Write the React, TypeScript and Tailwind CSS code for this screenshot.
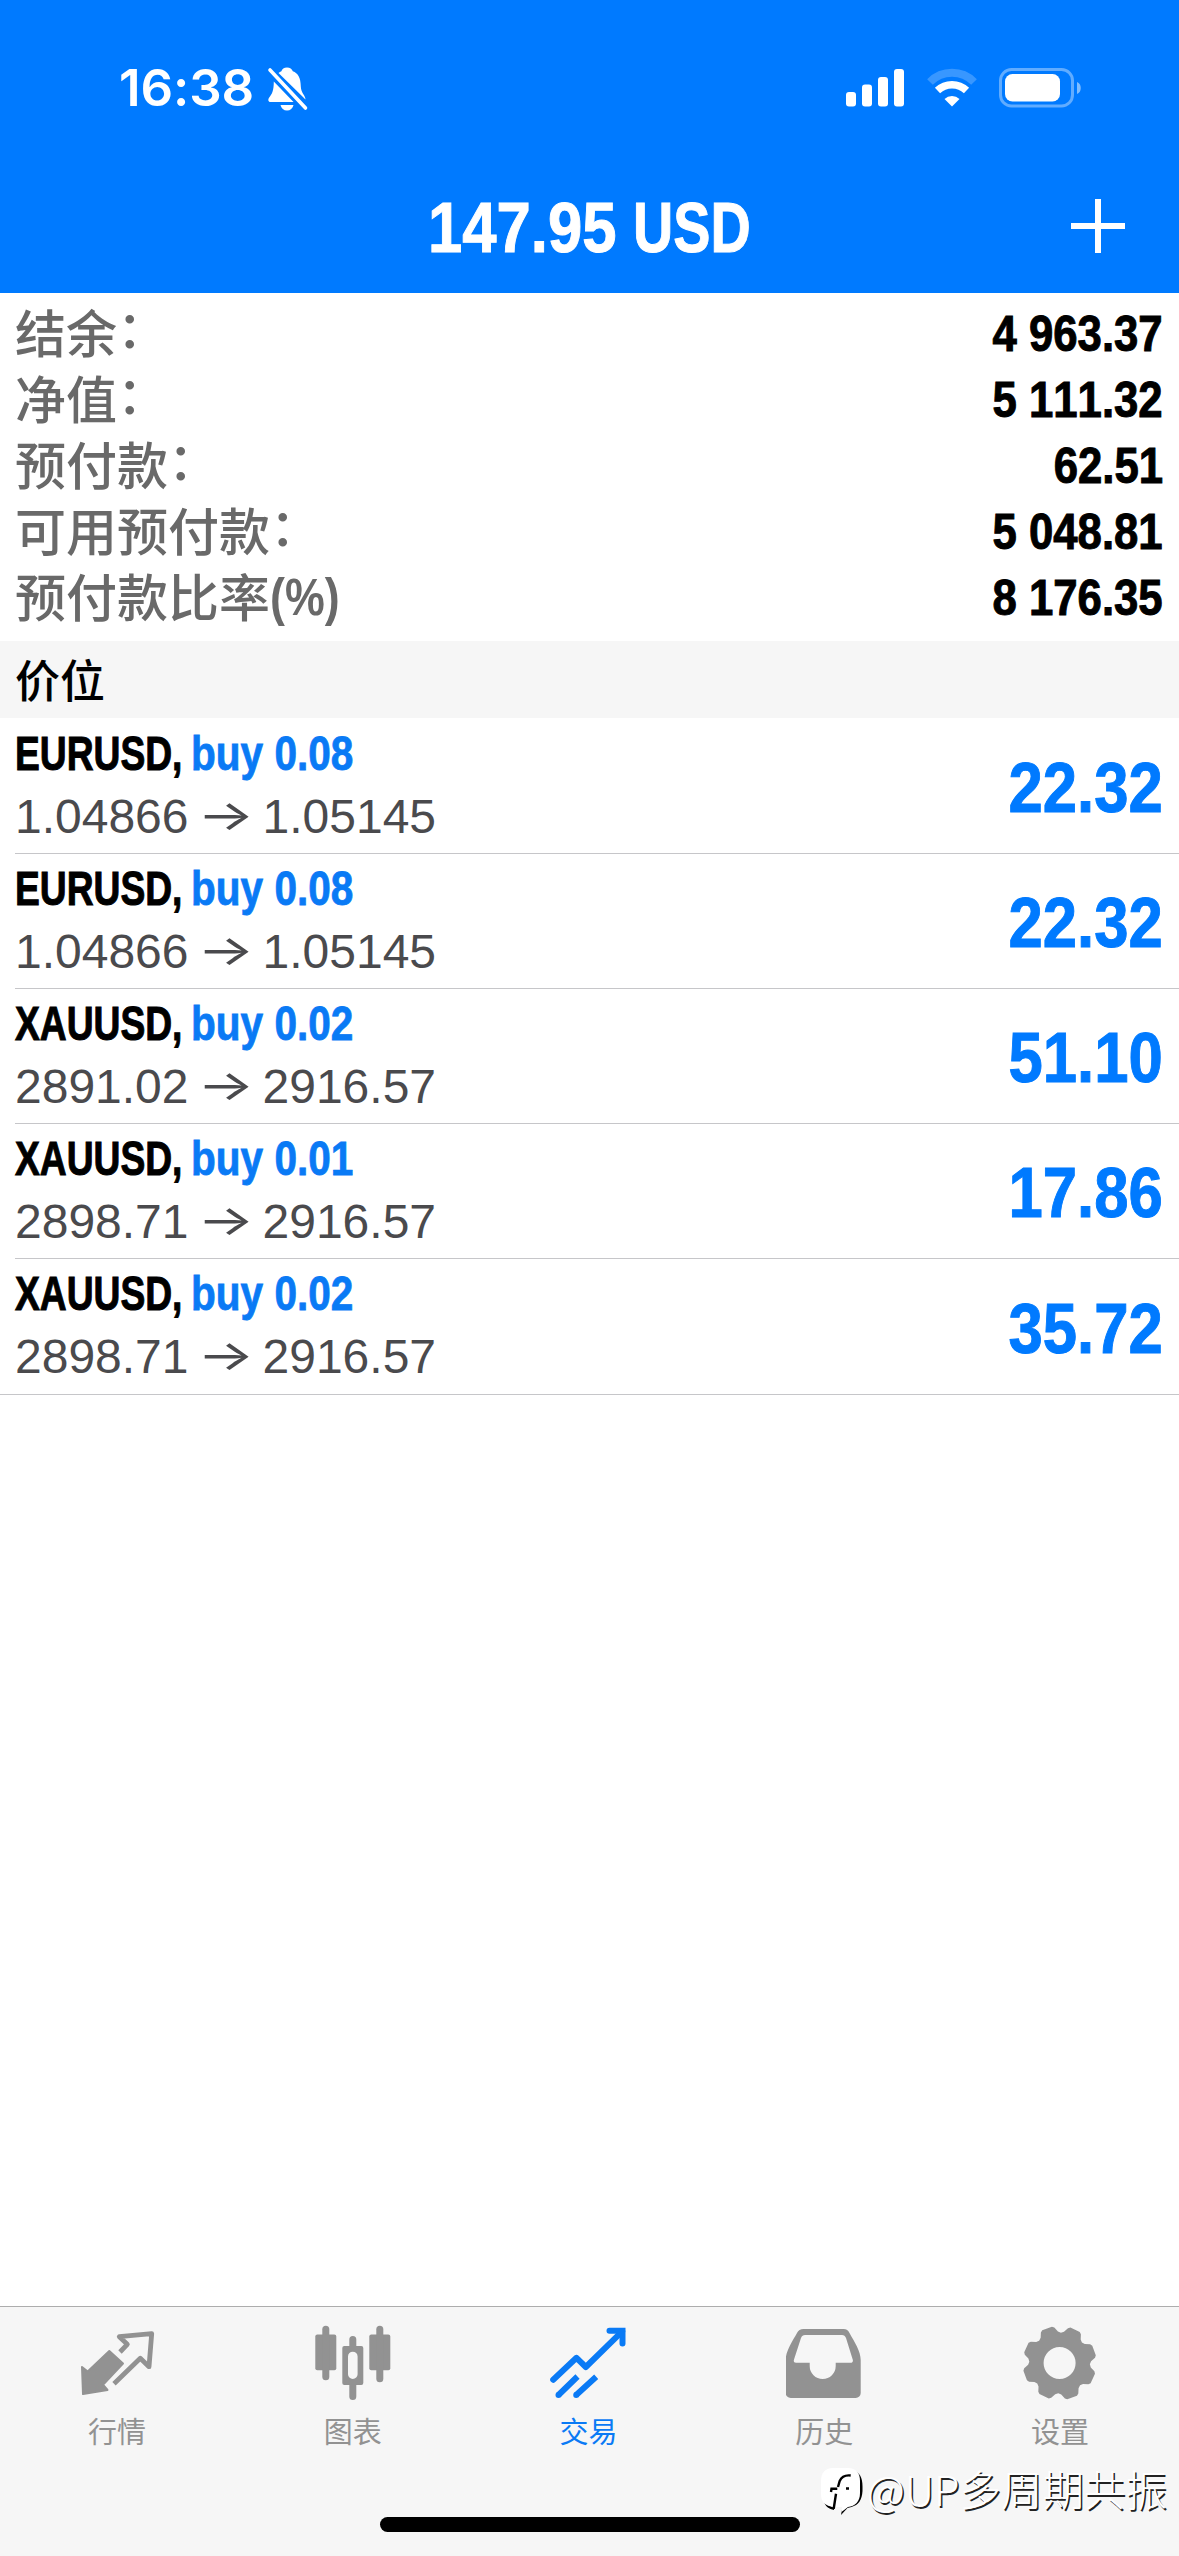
import type { ReactNode } from "react";

const summary = [
  { label: "结余", suffix: "：", value: "4 963.37" },
  { label: "净值", suffix: "：", value: "5 111.32" },
  { label: "预付款", suffix: "：", value: "62.51" },
  { label: "可用预付款", suffix: "：", value: "5 048.81" },
  { label: "预付款比率", suffix: "(%)", value: "8 176.35" },
];

const positions = [
  { symbol: "EURUSD", side: "buy 0.08", open: "1.04866", current: "1.05145", profit: "22.32" },
  { symbol: "EURUSD", side: "buy 0.08", open: "1.04866", current: "1.05145", profit: "22.32" },
  { symbol: "XAUUSD", side: "buy 0.02", open: "2891.02", current: "2916.57", profit: "51.10" },
  { symbol: "XAUUSD", side: "buy 0.01", open: "2898.71", current: "2916.57", profit: "17.86" },
  { symbol: "XAUUSD", side: "buy 0.02", open: "2898.71", current: "2916.57", profit: "35.72" },
];

// outline of the eight-toothed settings wheel
function gearPath(cx: number, cy: number) {
  const profile = [
    [-22.5, 30.3],
    [-17, 31.5],
    [-11.5, 35.8],
    [-8, 37],
    [8, 37],
    [11.5, 35.8],
    [17, 31.5],
  ];
  const points: string[] = [];
  for (let tooth = 0; tooth < 8; tooth++) {
    for (const [deg, r] of profile) {
      const a = ((tooth * 45 - 20 + deg) * Math.PI) / 180;
      points.push(`${(cx + r * Math.cos(a)).toFixed(2)} ${(cy + r * Math.sin(a)).toFixed(2)}`);
    }
  }
  return `M${points.join("L")}Z`;
}

function StatusBar() {
  return (
    <div className="flex h-[176px] items-start pl-[119px] pr-[96px] pt-[64px]">
      <span className="w-[141px] font-[Inter,sans-serif] text-[51px] font-semibold leading-[48px] tracking-[-0.1px]">
        16:38
      </span>
      <svg className="ml-[7px] mt-[2px] h-[46px] w-[42px]" viewBox="0 0 42 46" fill="white">
        <path d="M20 1.5c-3 0-5 1.7-5.600 3.800-1 .4-2 1-2.900 1.700L38.500 33.500c0-4-4.500-6.500-4.700-13-.2-9-2.800-13.500-8-15.300C25 3 23 1.500 20 1.500z" />
        <path d="M6.800 15.500 26.500 36H3.500C1 36 .8 33.500 2.200 31.500 5 28 6.800 25 6.800 15.500z" />
        <path d="M13.500 39h13c-.7 3.500-3.200 5.500-6.500 5.500s-5.800-2-6.500-5.500z" />
        <path d="M3 4 38.500 42" stroke="white" strokeWidth="3.600" strokeLinecap="round" />
      </svg>
      <div className="ml-auto flex items-start">
        <svg className="mt-[5px] h-[38px] w-[59px]" viewBox="0 0 59 38" fill="white">
          <rect x="0" y="23" width="10" height="14.500" rx="3" />
          <rect x="16" y="15.500" width="10" height="22" rx="3" />
          <rect x="32" y="8" width="10" height="29.500" rx="3" />
          <rect x="48" y="0" width="10" height="37.500" rx="3" />
        </svg>
        <svg className="ml-[22px] mt-[4px] h-[39px] w-[50px]" viewBox="0 0 50 39" fill="none">
          <path d="M3 14a31 31 0 0 1 44 0" stroke="white" strokeOpacity="0.22" strokeWidth="8" />
          <path d="M10.500 22.500a21 21 0 0 1 29 0" stroke="white" strokeWidth="7.500" />
          <path d="M25 38.500 17.500 31a11 11 0 0 1 15 0z" fill="white" />
        </svg>
        <svg className="ml-[22px] mt-[4px] h-[40px] w-[84px]" viewBox="0 0 84 40" fill="none">
          <rect x="1.500" y="1.500" width="72" height="36.500" rx="11" stroke="white" strokeOpacity="0.38" strokeWidth="3" />
          <rect x="6" y="6" width="55" height="27.500" rx="7.500" fill="white" />
          <path d="M78 14c5 1.500 5 10.500 0 12z" fill="white" fillOpacity="0.5" />
        </svg>
      </div>
    </div>
  );
}

function TitleBar() {
  return (
    <div className="flex h-[117px] items-start justify-between pl-[428px] pr-[54px]">
      <h1 className="mt-[12px] flex whitespace-nowrap text-[71px] font-bold leading-[80px] [-webkit-text-stroke:1px_white]">
        <span className="w-[205px] origin-left scale-x-[0.868]">147.95</span>
        <span className="w-[120px] origin-left scale-x-[0.785]">USD</span>
      </h1>
      <svg className="mt-[23px] size-[54px]" viewBox="0 0 54 54">
        <path d="M27 0v54M0 27h54" stroke="white" strokeWidth="6" />
      </svg>
    </div>
  );
}

function TabItem({ label, active, children }: { label: string; active?: boolean; children: ReactNode }) {
  return (
    <div className={`flex flex-col items-center pt-[17px] ${active ? "text-[#0a7af5]" : "text-[#929292]"}`}>
      <svg className="h-[78px] w-[78px]" viewBox="0 0 78 78" fill="currentColor">
        {children}
      </svg>
      <span className="mr-[2px] mt-[8px] font-['Noto_Sans_CJK_SC',sans-serif] text-[29px] leading-[40px]">{label}</span>
    </div>
  );
}

function TabBar() {
  return (
    <nav className="grid h-[160px] grid-cols-5">
      <TabItem label="行情">
        <path d="M3 43 8.700 47.500 30.300 27 44 39.500 24 60.700 28.500 66 4 70z" stroke="currentColor" strokeWidth="2" strokeLinejoin="round" />
        <path d="M41 28 48.300 20.300 40.300 12.700 72.700 9.700 70 42.700 61.300 34.300 35 59.700" fill="none" stroke="currentColor" strokeWidth="4.800" strokeLinejoin="round" />
      </TabItem>
      <TabItem label="图表">
        <rect x="0.300" y="10.600" width="21" height="35.600" rx="2" />
        <rect x="7.300" y="1.700" width="7" height="54.500" rx="3.500" />
        <path fillRule="evenodd" d="M29.300 22h17a2 2 0 0 1 2 2v35a2 2 0 0 1-2 2h-17a2 2 0 0 1-2-2V24a2 2 0 0 1 2-2zM37.800 27.700a4.800 4.800 0 0 0-4.800 4.800v17.700a4.800 4.800 0 0 0 9.600 0V32.500a4.800 4.800 0 0 0-4.800-4.800z" />
        <path d="M34.300 23v-7.500a3.500 3.500 0 0 1 7 0V23zM34.300 60v12.500a3.500 3.500 0 0 0 7 0V60z" />
        <rect x="54.300" y="10.600" width="21" height="35.600" rx="2" />
        <rect x="61.300" y="1.700" width="7" height="56.500" rx="3.500" />
      </TabItem>
      <TabItem label="交易" active>
        <g fill="none" stroke="currentColor" strokeWidth="6">
          <path d="M3.200 55.700 26.500 33.800 35.800 43 72.200 7.300" strokeLinecap="round" strokeLinejoin="round" />
          <path d="M59.500 6.700H72.500V19.500" strokeLinecap="round" />
          <path d="M8.500 71 27.500 52.500M26.200 71 46.200 52.700" />
        </g>
        <circle cx="8.500" cy="71" r="3" />
        <circle cx="26.200" cy="71" r="3" />
      </TabItem>
      <TabItem label="历史">
        <path fillRule="evenodd" d="M17.500 5h40c3 0 4.800 1.500 6 4C68.500 18 74.700 27 74.700 36v33a5 5 0 0 1-5 5H4.700a5 5 0 0 1-5-5V36C-.3 27 6 18 11 9c1.300-2.500 3.500-4 6.500-4zM19 11c-2 0-3 .8-4 3L8 35.500c-.6 2 0 3.200 2 3.200h13.700V42a13 13 0 0 0 26 0v-3.300h14.800c2 0 2.800-1.200 2.200-3.200L60 14c-.8-2-2-3-4-3z" />
      </TabItem>
      <TabItem label="设置">
        <path fillRule="evenodd" d={`${gearPath(37.6, 39)}M53.600 39a16 16 0 1 0-32 0 16 16 0 0 0 32 0z`} />
      </TabItem>
    </nav>
  );
}

function Watermark() {
  return (
    <div className="absolute bottom-[40px] right-[12px] flex items-start text-white">
      <svg className="mt-[6px] h-[50px] w-[46px]" viewBox="0 0 46 50">
        <path d="M36 5c6 3 8 8 7.500 20-.5 9-4 14-11 16l-4 1-6.500 7 1.500-8zM5 36l10 6v2C10 43 7 41 5 36z" fill="black" />
        <path d="M14 2h15c8 0 12 5 12 13v12c0 9-5 13-12 14l-6.500 5 .5-5h-8C6 40 2 36 2 28V15C2 7 6 2 14 2z" fill="white" />
        <path d="M31.700 9.500c-6-.7-9 1-11 5.500L19 21M18.300 22.700H12.500L12 26M17 27.700l-2.300 15M27 22.500h3" fill="none" stroke="black" strokeWidth="2.400" />
      </svg>
      <span className="ml-[2px] whitespace-nowrap font-['Noto_Sans_CJK_SC',sans-serif] text-[41.500px] font-light leading-[56px] [text-shadow:1.500px_1.500px_0_#222]">
        @UP多周期共振
      </span>
    </div>
  );
}

export default function App() {
  return (
    <div className="relative flex h-[2556px] w-[1179px] flex-col overflow-hidden bg-white font-['Liberation_Sans','Noto_Sans_CJK_SC',sans-serif] text-black [font-kerning:none]">
      <header className="h-[293px] bg-[#007aff] text-white">
        <StatusBar />
        <TitleBar />
      </header>

      <section className="h-[348px] pl-[15px] pr-[16px] pt-[7px]">
        {summary.map((row) => (
          <div key={row.label} className="flex h-[66px] items-center justify-between">
            <div className="flex h-[66px] text-[#696969]">
              <span className="-mt-[2px] font-['Noto_Sans_CJK_SC',sans-serif] text-[51px] font-medium leading-[66px]">
                {row.label}
              </span>
              {row.suffix === "：" ? (
                <span className="-mt-[7px] font-['Noto_Sans_CJK_SC',sans-serif] text-[51px] font-medium leading-[66px]">
                  ：
                </span>
              ) : (
                <span className="origin-left scale-x-[0.86] text-[52px] font-bold leading-[66px]">{row.suffix}</span>
              )}
            </div>
            <span className="mt-[2px] origin-right scale-x-[0.874] text-[50px] font-bold leading-[66px] [-webkit-text-stroke:1px_black]">
              {row.value}
            </span>
          </div>
        ))}
      </section>

      <h2 className="h-[77px] bg-[#f6f6f6] pl-[15px] font-['Noto_Sans_CJK_SC',sans-serif] text-[45px] font-medium leading-[75px]">
        价位
      </h2>

      <ul className="border-b border-[#c6c6c9] pt-px">
        {positions.map((p, i) => (
          <li key={i} className="pl-[15px]">
            <div
              className={`flex h-[135px] items-center justify-between pr-[16px] ${
                i < positions.length - 1 ? "border-b border-[#c6c6c9]" : ""
              }`}
            >
              <div>
                <p className="-mt-[2px] flex h-[63px] whitespace-nowrap text-[48px] font-bold leading-[63px]">
                  <span className="w-[176px] origin-left scale-x-[0.775] [-webkit-text-stroke:1px_black]">
                    {p.symbol},
                  </span>
                  <span className="w-[165px] origin-left scale-x-[0.845] text-[#0a7af5] [-webkit-text-stroke:0.8px_#0a7af5]">
                    {p.side}
                  </span>
                </p>
                <p className="flex h-[64px] items-center text-[48px] leading-[64px] text-[#4a4a4d]">
                  {p.open}
                  <span className="mx-[13px] w-[48px] -translate-y-[2px] scale-x-[1.25] scale-y-[0.88] text-center font-[Inter,sans-serif]">
                    →
                  </span>
                  {p.current}
                </p>
              </div>
              <span className="mt-[5px] origin-right scale-x-[0.868] text-[71px] font-bold text-[#007aff] [-webkit-text-stroke:1px_#007aff]">
                {p.profit}
              </span>
            </div>
          </li>
        ))}
      </ul>

      <footer className="mt-auto h-[250px] border-t border-[#adadad] bg-[#f6f6f6]">
        <TabBar />
        <div className="mx-auto mt-[50px] h-[15px] w-[420px] rounded-full bg-black" />
      </footer>
      <Watermark />
    </div>
  );
}
